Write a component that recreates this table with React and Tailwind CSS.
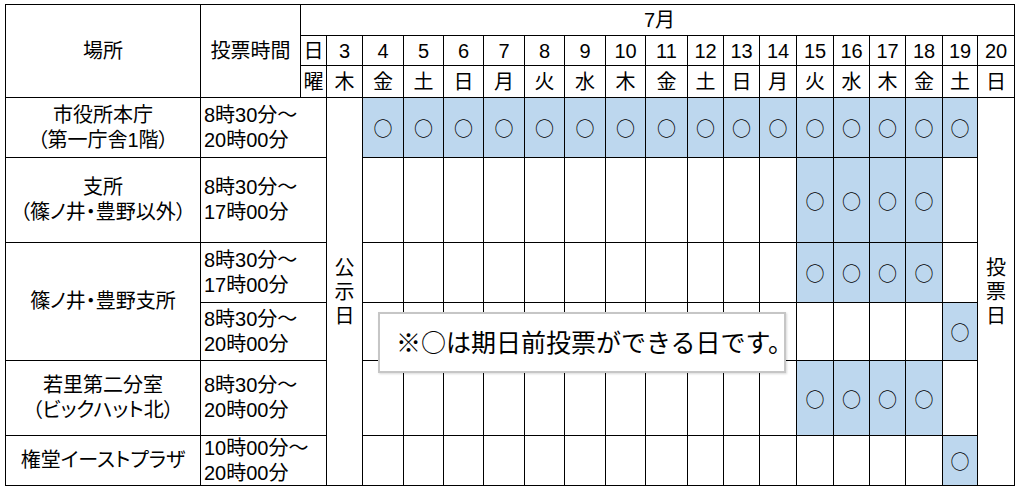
const DAYS = [
  [3, "木"], [4, "金"], [5, "土"], [6, "日"], [7, "月"], [8, "火"], [9, "水"], [10, "木"], [11, "金"],
  [12, "土"], [13, "日"], [14, "月"], [15, "火"], [16, "水"], [17, "木"], [18, "金"], [19, "土"], [20, "日"],
];

const INNER = [4, 5, 6, 7, 8, 9, 10, 11, 12, 13, 14, 15, 16, 17, 18, 19];

const ROWS = [
  { name: ["市役所本庁", "（第一庁舎1階）"], time: ["8時30分～", "20時00分"], marks: INNER },
  { name: ["支所", "（篠ノ井・豊野以外）"], time: ["8時30分～", "17時00分"], marks: [15, 16, 17, 18] },
  { name: ["篠ノ井・豊野支所"], span: true, time: ["8時30分～", "17時00分"], marks: [15, 16, 17, 18] },
  { name: null, time: ["8時30分～", "20時00分"], marks: [19] },
  { name: ["若里第二分室", "（ビックハット北）"], time: ["8時30分～", "20時00分"], marks: [15, 16, 17, 18] },
  { name: ["権堂イーストプラザ"], time: ["10時00分～", "20時00分"], marks: [19] },
];

function Vertical({ text }) {
  return (
    <div className="row-span-6 bg-white flex flex-col items-center justify-center leading-[24px]">
      {text.split("").map((c, i) => (
        <span key={i}>{c}</span>
      ))}
    </div>
  );
}

export default function App() {
  return (
    <div className="w-[1021px] h-[490px] bg-white relative overflow-hidden text-black text-[20px] [font-family:'Liberation_Sans','Noto_Sans_CJK_JP',sans-serif] [font-feature-settings:'palt']">
      <div className="absolute left-[5px] top-[4px] p-px bg-black grid gap-px grid-cols-[194px_99px_25px_35px_40px_39px_39px_40px_39px_40px_39px_41px_35px_35px_36px_36px_35px_35px_36px_34px_36px] grid-rows-[30px_29px_31px_59px_84px_59px_57px_74px_49px]">
        <div className="row-span-3 bg-white flex items-center justify-center">場所</div>
        <div className="row-span-3 bg-white flex items-center justify-center">投票時間</div>
        <div className="col-span-19 bg-white flex items-center justify-center pl-[4px]">7月</div>

        <div className="bg-white flex items-center justify-center">日</div>
        {DAYS.map(([d]) => (
          <div key={"d" + d} className="bg-white flex items-center justify-center">{d}</div>
        ))}
        <div className="bg-white flex items-center justify-center">曜</div>
        {DAYS.map(([d, w]) => (
          <div key={"w" + d} className="bg-white flex items-center justify-center">{w}</div>
        ))}

        {ROWS.map((r, i) => (
          <>
            {r.name && (
              <div
                key={"n" + i}
                className={(r.span ? "row-span-2 " : "") + "bg-white flex flex-col items-center justify-center leading-[25px]"}
              >
                {r.name.map((n) => (
                  <span key={n}>{n}</span>
                ))}
              </div>
            )}
            <div key={"t" + i} className="col-span-2 bg-white flex flex-col justify-center pl-[3px] leading-[25px]">
              {r.time.map((t) => (
                <span key={t}>{t}</span>
              ))}
            </div>
            {i === 0 && <Vertical text="公示日" />}
            {INNER.map((d) => {
              const on = r.marks.includes(d);
              return (
                <div
                  key={"c" + i + "-" + d}
                  className={(on ? "bg-[#bdd7ee]" : "bg-white") + " flex items-center justify-center"}
                >
                  {on && <span className="[font-family:'Noto_Sans_CJK_JP',sans-serif] text-[19px] leading-none">○</span>}
                </div>
              );
            })}
            {i === 0 && <Vertical text="投票日" />}
          </>
        ))}
      </div>

      <div className="absolute left-[378px] top-[312px] w-[408px] h-[61px] bg-white border-2 border-[#c6c6c6] shadow-[1px_1px_2px_rgba(0,0,0,0.15)] flex items-center pl-[16px] pb-[2px] whitespace-nowrap text-[25px] [font-family:'Noto_Sans_CJK_JP',sans-serif] [font-feature-settings:normal]">
        ※○は期日前投票ができる日です。
      </div>
    </div>
  );
}
